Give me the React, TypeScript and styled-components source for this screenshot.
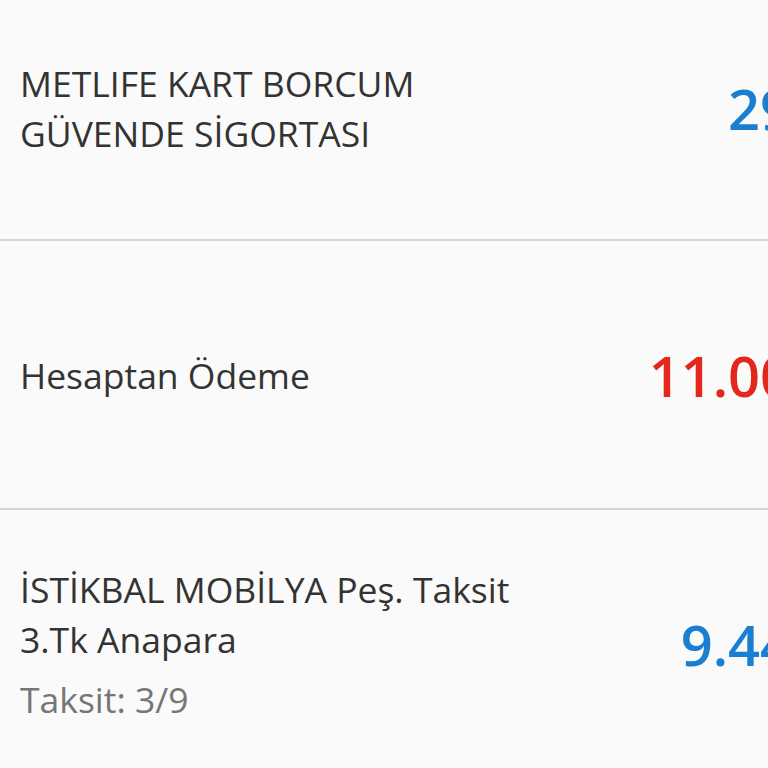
import React from "react";
import styled, { createGlobalStyle } from "styled-components";

const GlobalStyle = createGlobalStyle`
	html, body {
		margin: 0;
		padding: 0;
		background: #fafafa;
		overflow: hidden;
	}
	body {
		font-family: "Open Sans", "Liberation Sans", sans-serif;
	}
`;

type Tone = "credit" | "debit";

interface Transaction {
	title: string[];
	note?: string;
	amount: string;
	tone: Tone;
}

const transactions: Transaction[] = [
	{ title: ["METLIFE KART BORCUM", "GÜVENDE SİGORTASI"], amount: "299,90 TL", tone: "credit" },
	{ title: ["Hesaptan Ödeme"], amount: "11.000,00 TL", tone: "debit" },
	{
		title: ["İSTİKBAL MOBİLYA Peş. Taksit", "3.Tk Anapara"],
		note: "Taksit: 3/9",
		amount: "9.440,00 TL",
		tone: "credit",
	},
];

export default function App() {
	return (
		<>
			<GlobalStyle />
			<Viewport>
				<List>
					{transactions.map((t, i) => (
						<Row key={i}>
							<Details>
								{t.title.map((line) => (
									<Title key={line}>{line}</Title>
								))}
								{t.note && <Note>{t.note}</Note>}
							</Details>
							<Amount $tone={t.tone}>{t.amount}</Amount>
						</Row>
					))}
				</List>
			</Viewport>
		</>
	);
}

const Viewport = styled.div`
	width: 768px;
	height: 768px;
	overflow: hidden;
	background: #fafafa;
`;

// list is scrolled a little, so the first row is cut at the top
const List = styled.ul`
	list-style: none;
	margin: -24px 0 0;
	padding: 0;
	width: 980px;
`;

const Row = styled.li`
	display: flex;
	align-items: center;
	justify-content: space-between;
	min-height: 269px;
	padding: 0 0 0 20px;
	border-bottom: 2px solid #d4d4d4;
	box-sizing: border-box;

	&:first-child {
		min-height: 265px;
	}
`;

const Details = styled.div`
	display: flex;
	flex-direction: column;
`;

const Title = styled.span`
	font-size: 35.5px;
	line-height: 50px;
	color: #333333;
`;

const Note = styled.span`
	font-size: 35.5px;
	line-height: 50px;
	margin-top: 10px;
	color: #767676;
`;

const Amount = styled.span<{ $tone: Tone }>`
	font-size: 56px;
	font-weight: 600;
	color: ${({ $tone }) => ($tone === "debit" ? "#e2281c" : "#1a7fd0")};
	white-space: nowrap;
`;
